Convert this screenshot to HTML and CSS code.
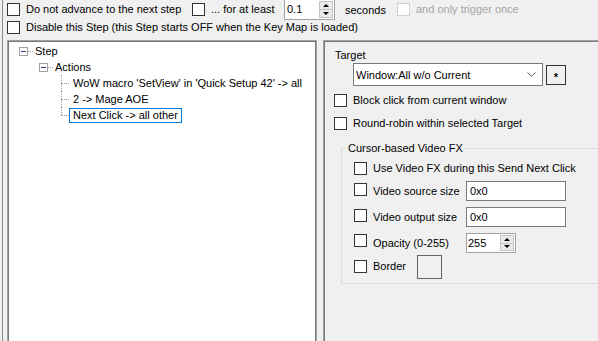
FILE: index.html
```html
<!DOCTYPE html>
<html>
<head>
<meta charset="utf-8">
<link rel="stylesheet" href="styles.css">
</head>
<body>
<div class="win">
  <div class="top">
    <div class="row r1">
      <label class="cb w1"><span class="box"></span><span>Do not advance to the next step</span></label>
      <label class="cb w2"><span class="box"></span><span>... for at least</span></label>
      <div class="spin spin-top">
        <span class="val">0.1</span>
        <span class="arrows"><span class="arr up"></span><span class="arr dn"></span></span>
      </div>
      <span class="seconds">seconds</span>
      <label class="cb disabled"><span class="box"></span><span>and only trigger once</span></label>
    </div>
    <div class="row r2">
      <label class="cb"><span class="box"></span><span>Disable this Step (this Step starts OFF when the Key Map is loaded)</span></label>
    </div>
  </div>
  <div class="main">
    <div class="tree">
      <div class="node lvl0"><span class="exp"><span class="minus"></span></span><span class="dash"></span><span class="txt">Step</span></div>
      <div class="node lvl1"><span class="exp"><span class="minus"></span></span><span class="dash"></span><span class="txt">Actions</span></div>
      <div class="node lvl2"><span class="conn"><span class="c-top"></span><span class="c-bot"></span></span><span class="item">WoW macro 'SetView' in 'Quick Setup 42' -&gt; all</span></div>
      <div class="node lvl2"><span class="conn"><span class="c-top"></span><span class="c-bot"></span></span><span class="item">2 -&gt; Mage AOE</span></div>
      <div class="node lvl2 last"><span class="conn"><span class="c-top"></span><span class="c-bot"></span></span><span class="item sel">Next Click -&gt; all other</span></div>
    </div>
    <div class="panel">
      <div class="target-label">Target</div>
      <div class="target-row">
        <div class="combo"><span class="combo-text">Window:All w/o Current</span>
          <svg class="chev" width="9" height="5" viewBox="0 0 9 5"><polyline points="0.5,0.5 4.5,4.5 8.5,0.5" fill="none" stroke="#606060" stroke-width="1"/></svg>
        </div>
        <div class="btn">*</div>
      </div>
      <label class="cb prow p1"><span class="box"></span><span>Block click from current window</span></label>
      <label class="cb prow p2"><span class="box"></span><span>Round-robin within selected Target</span></label>
      <fieldset class="group">
        <legend>Cursor-based Video FX</legend>
        <label class="cb g1"><span class="box"></span><span>Use Video FX during this Send Next Click</span></label>
        <div class="grow g2">
          <span class="box"></span><span class="glabel">Video source size</span>
          <div class="tbox">0x0</div>
        </div>
        <div class="grow g3">
          <span class="box"></span><span class="glabel">Video output size</span>
          <div class="tbox">0x0</div>
        </div>
        <div class="grow g4">
          <span class="box b1"></span><span class="glabel">Opacity (0-255)</span>
          <div class="spin spin-op">
            <span class="val">255</span>
            <span class="arrows"><span class="arr up"></span><span class="arr dn"></span></span>
          </div>
        </div>
        <div class="grow g5">
          <span class="box b5"></span><span class="glabel short">Border</span>
          <div class="swatch"></div>
        </div>
      </fieldset>
    </div>
  </div>
</div>
</body>
</html>
```
FILE: styles.css
```css
* { box-sizing: border-box; }
html, body { margin: 0; padding: 0; }
body {
  width: 598px;
  height: 341px;
  overflow: hidden;
  background: #f0f0f0;
  font-family: "Liberation Sans", Arial, sans-serif;
  font-size: 11px;
  color: #000;
}
.win {
  height: 341px;
  overflow: hidden;
  margin-left: 2px;
  border-left: 1px solid #8c8c8c;
}
.row { display: flex; align-items: center; padding-left: 4px; }
.r1 { height: 19px; }
.r2 { height: 17px; margin-top: 0; }

.cb { display: flex; align-items: center; white-space: nowrap; line-height: 13px; }
.box {
  display: inline-block;
  flex: none;
  width: 13px;
  height: 13px;
  border: 1px solid #333;
  background: #fff;
  margin-right: 6px;
}
.w1 { width: 185px; }
.w2 { width: 92px; }
.disabled { color: #a6a6a6; }
.disabled .box { border-color: #cfcfcf; background: #fff; }
.seconds { width: 62px; padding-left: 10px; }

.spin {
  display: flex;
  background: #fff;
  border: 1px solid #a3a3a3;
  flex: none;
}
.spin .val { flex: 1; line-height: 17px; }
.spin-top { width: 51px; height: 21px; margin-top: -1px; align-self: flex-start; }
.spin-top .val { padding-left: 2px; line-height: 19px; }
.arrows {
  width: 15px;
  display: flex;
  flex-direction: column;
  padding: 1px 1px 1px 0;
}
.arr {
  flex: 1;
  display: flex;
  align-items: center;
  justify-content: center;
  background: #eaeaea;
  border: 1px solid #c4c4c4;
}
.arr.dn { border-top: none; }
.arr.up::after {
  content: "";
  border-left: 3px solid transparent;
  border-right: 3px solid transparent;
  border-bottom: 3px solid #000;
}
.arr.dn::after {
  content: "";
  border-left: 3px solid transparent;
  border-right: 3px solid transparent;
  border-top: 3px solid #000;
}

.main { display: flex; margin-top: 4px; height: 320px; }
.tree {
  margin-left: 4px;
  width: 310px;
  height: 320px;
  background: #fff;
  border: 1px solid #a0a0a0;
  box-shadow: inset 1px 1px 0 #7a7a7a, inset -1px 0 0 #7a7a7a;
  padding-top: 2px;
}
.node { display: flex; align-items: center; height: 16px; line-height: 16px; white-space: nowrap; }
.lvl0 { padding-left: 11px; }
.lvl1 { padding-left: 31px; }
.lvl2 { padding-left: 53px; }
.exp {
  width: 9px;
  height: 9px;
  border: 1px solid #a0a0a0;
  background: #fff;
  display: flex;
  align-items: center;
  justify-content: center;
}
.minus { width: 5px; height: 1px; background: #2e3a78; }
.dash { width: 5px; border-top: 1px dotted #a0a0a0; margin-right: 2px; }
.conn { width: 8px; height: 16px; display: flex; flex-direction: column; }
.c-top { height: 8px; border-left: 1px dotted #a0a0a0; }
.c-bot { height: 8px; border-left: 1px dotted #a0a0a0; border-top: 1px dotted #a0a0a0; }
.last .c-bot { border-left: none; }
.item { border: 1px solid transparent; padding: 0 3px; line-height: 13px; height: 15px; }
.item.sel { border-color: #0078d7; }

.panel {
  margin-left: 6px;
  flex: 1;
  height: 320px;
  border: 1px solid #a0a0a0;
  border-right: none;
  box-shadow: inset 1px 1px 0 #7a7a7a;
  overflow: hidden;
  padding: 1px 0 0 1px;
}
.target-label { margin: 7px 0 0 10px; line-height: 13px; }
.target-row { display: flex; align-items: flex-start; margin: 1px 0 0 28px; }
.combo {
  width: 190px;
  height: 23px;
  border: 1px solid #7a7a7a;
  background: #fff;
  display: flex;
  align-items: center;
  justify-content: space-between;
  padding: 0 6px 0 2px;
}
.chev { display: block; }
.btn {
  width: 20px;
  height: 20px;
  margin: 2px 0 0 3px;
  border: 1px solid #333;
  background: #f0f0f0;
  display: flex;
  align-items: center;
  justify-content: center;
  font-weight: bold;
  padding-top: 3px;
}
.prow { margin-left: 9px; height: 13px; }
.p1 { margin-top: 8px; }
.p2 { margin-top: 10px; }

.group {
  margin: 12px 0 0 16px;
  width: 280px;
  border: 1px solid #dcdcdc;
  padding: 0 0 4px 12px;
  min-width: 0;
}
.group legend {
  margin-left: -8px;
  padding: 0 2px;
  line-height: 13px;
}
.g1 { margin-top: 7px; height: 13px; }
.grow { display: flex; align-items: flex-start; }
.grow .box { margin-top: 2px; }
.grow .b1 { margin-top: 1px; }
.grow .b5 { margin-top: 5px; }
.glabel { width: 93px; line-height: 13px; margin-top: 4px; white-space: nowrap; }
.glabel.short { width: 44px; margin-top: 5px; }
.g2 { margin-top: 6px; }
.g3 { margin-top: 6px; }
.g4 { margin-top: 6px; }
.g5 { margin-top: 2px; }
.tbox {
  width: 100px;
  height: 20px;
  border: 1px solid #7a7a7a;
  background: #fff;
  padding-left: 3px;
  line-height: 18px;
}
.spin-op { width: 50px; height: 20px; }
.spin-op .val { padding-left: 1px; line-height: 18px; }
.swatch {
  width: 25px;
  height: 24px;
  border: 1px solid #646464;
  background: #f0f0f0;
}
```
